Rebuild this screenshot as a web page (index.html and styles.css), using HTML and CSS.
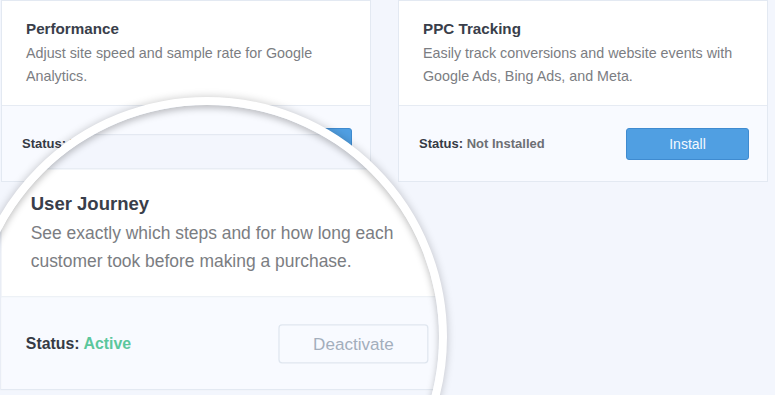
FILE: index.html
```html
<!DOCTYPE html>
<html lang="en">
<head>
  <meta charset="UTF-8">
  <meta name="viewport" content="width=device-width, initial-scale=1.0">
  <title>Addons</title>
  <link rel="stylesheet" href="styles.css">
</head>
<body>
  <div class="grid">
    <div class="card">
      <div class="card-body">
        <h3 class="card-title">Performance</h3>
        <p class="card-text">Adjust site speed and sample rate for Google Analytics.</p>
      </div>
      <div class="card-footer">
        <span class="status">Status: <span class="status-value">Not Installed</span></span>
        <button class="btn btn-primary">Install</button>
      </div>
    </div>

    <div class="card">
      <div class="card-body">
        <h3 class="card-title">PPC Tracking</h3>
        <p class="card-text">Easily track conversions and website events with Google Ads, Bing Ads, and Meta.</p>
      </div>
      <div class="card-footer">
        <span class="status">Status: <span class="status-value">Not Installed</span></span>
        <button class="btn btn-primary">Install</button>
      </div>
    </div>
  </div>

  <!-- magnifier over the next card -->
  <div class="lens">
    <div class="lens-view">
      <div class="card card-stub"></div>
      <div class="card">
        <div class="card-body">
          <h3 class="card-title">User Journey</h3>
          <p class="card-text">See exactly which steps and for how long each customer took before making a purchase.</p>
        </div>
        <div class="card-footer">
          <span class="status">Status: <span class="status-value active">Active</span></span>
          <button class="btn btn-light">Deactivate</button>
        </div>
      </div>
    </div>
  </div>
</body>
</html>
```

FILE: styles.css
```css
body {
  font-family: 'Liberation Sans', Arial, sans-serif;
  margin: 0;
  padding: 0;
  height: 395px;
  background: #f3f6fd;
  overflow: hidden;
  position: relative;
}

.grid {
  display: grid;
  grid-template-columns: 370px 370px;
  column-gap: 27px;
  padding-left: 1px;
}

.card {
  background: #fff;
  border: 1px solid #e3e9f2;
  display: flex;
  flex-direction: column;
}

.card-body {
  padding: 19px 24px 17px;
  border-bottom: 1px solid #e6ebf3;
}

.card-title {
  margin: 0 0 4px;
  font-size: 15.2px;
  line-height: 18px;
  font-weight: bold;
  color: #393e4a;
}

.card-text {
  margin: 0;
  font-size: 14.3px;
  line-height: 23px;
  color: #7b7d82;
}

.card-footer {
  height: 75px;
  padding: 0 18px 0 20px;
  background: #f8faff;
  display: flex;
  align-items: center;
  justify-content: space-between;
}

.status {
  font-size: 13px;
  font-weight: bold;
  color: #353a45;
}

.status-value {
  color: #6d6f74;
}

.status-value.active {
  color: #5bc79c;
}

.btn {
  width: 123px;
  height: 32px;
  border-radius: 3px;
  font-family: inherit;
  font-size: 14px;
  cursor: pointer;
}

.btn-primary {
  background: #509fe2;
  border: 1px solid #3f8bd0;
  color: #f4f9ff;
}

.btn-light {
  background: #f8faff;
  border: 1px solid #dfe6ef;
  color: #a3aebc;
}

/* magnifier */
.lens {
  position: absolute;
  left: -33px;
  top: 97px;
  width: 480px;
  height: 480px;
  box-sizing: border-box;
  border: 8px solid #fff;
  border-radius: 50%;
  overflow: hidden;
  background: #f3f6fd;
  box-shadow: 0 0 8px rgba(0, 0, 0, 0.22);
}

.lens::after {
  content: '';
  position: absolute;
  inset: 0;
  border-radius: 50%;
  box-shadow: inset 0 3px 7px rgba(0, 0, 0, 0.25);
}

.lens-view {
  position: absolute;
  left: 24px;
  top: -193px;
  width: 370px;
  padding-left: 1px;
  display: flex;
  flex-direction: column;
  gap: 27px;
  transform: scale(1.22);
  transform-origin: 0 0;
}

.card-stub {
  height: 181px;
  background: #f8faff;
}
```
